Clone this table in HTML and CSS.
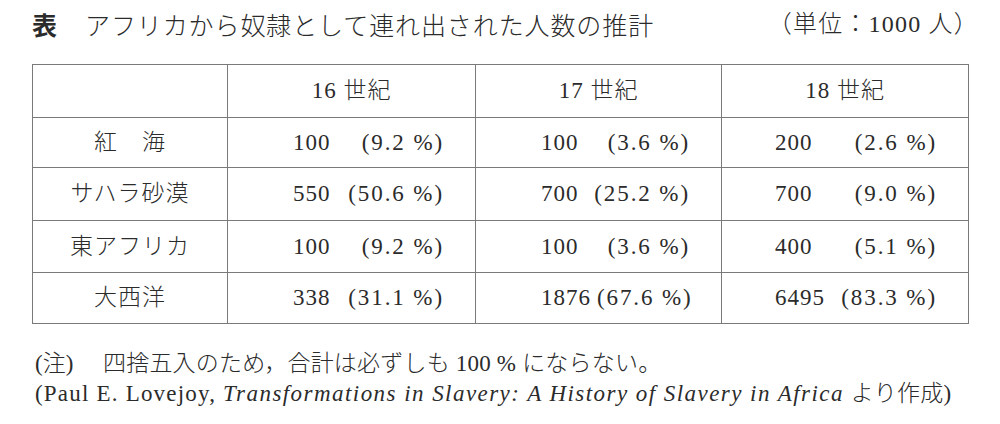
FILE: index.html
```html
<!DOCTYPE html>
<html lang="ja">
<head>
<meta charset="utf-8">
<link rel="stylesheet" href="styles.css">
</head>
<body>
<div class="page">
  <div class="title">
    <h1 class="heading"><span class="mark">表</span><span class="caption">アフリカから奴隷として連れ出された人数の推計</span></h1>
    <div class="unit">（単位：1000 人）</div>
  </div>
  <table class="data">
    <colgroup>
      <col class="c-label"><col class="c-16"><col class="c-17"><col class="c-18">
    </colgroup>
    <thead>
      <tr class="r-head"><th></th><th>16 世紀</th><th>17 世紀</th><th>18 世紀</th></tr>
    </thead>
    <tbody>
      <tr class="r1">
        <th class="label">紅　海</th>
        <td class="v"><div class="pair"><span class="n">100</span><span class="p">(9.2 %)</span></div></td>
        <td class="v"><div class="pair"><span class="n">100</span><span class="p">(3.6 %)</span></div></td>
        <td class="v v3"><div class="pair"><span class="n">200</span><span class="p">(2.6 %)</span></div></td>
      </tr>
      <tr class="r2">
        <th class="label">サハラ砂漠</th>
        <td class="v"><div class="pair"><span class="n">550</span><span class="p">(50.6 %)</span></div></td>
        <td class="v"><div class="pair"><span class="n">700</span><span class="p">(25.2 %)</span></div></td>
        <td class="v v3"><div class="pair"><span class="n">700</span><span class="p">(9.0 %)</span></div></td>
      </tr>
      <tr class="r3">
        <th class="label">東アフリカ</th>
        <td class="v"><div class="pair"><span class="n">100</span><span class="p">(9.2 %)</span></div></td>
        <td class="v"><div class="pair"><span class="n">100</span><span class="p">(3.6 %)</span></div></td>
        <td class="v v3"><div class="pair"><span class="n">400</span><span class="p">(5.1 %)</span></div></td>
      </tr>
      <tr class="r4">
        <th class="label">大西洋</th>
        <td class="v"><div class="pair"><span class="n">338</span><span class="p">(31.1 %)</span></div></td>
        <td class="v"><div class="pair"><span class="n">1876</span><span class="p">(67.6 %)</span></div></td>
        <td class="v v3"><div class="pair"><span class="n">6495</span><span class="p">(83.3 %)</span></div></td>
      </tr>
    </tbody>
  </table>
  <div class="notes">
    <p class="note"><span class="tag">(注)</span><span class="note-text">四捨五入のため，合計は必ずしも 100 % にならない。</span></p>
    <p class="source">(Paul E. Lovejoy, <i class="book">Transformations in Slavery: A History of Slavery in Africa</i> <span class="ja">より作成</span>)</p>
  </div>
</div>
</body>
</html>
```
FILE: styles.css
```css
html, body {
  margin: 0;
  padding: 0;
  background: #ffffff;
}
body {
  font-family: "Liberation Serif", "Noto Sans CJK JP", serif;
  color: #2b2b2b;
  width: 1000px;
  height: 424px;
  overflow: hidden;
}
.page {
  padding: 9px 0 0 32px;
}
.title {
  display: flex;
  justify-content: space-between;
  align-items: center;
  height: 30px;
  padding-right: 21px;
}
.heading {
  margin: 0;
  font-size: 25px;
  font-weight: normal;
  line-height: 30px;
  display: flex;
}
.mark {
  font-family: "Noto Sans CJK JP", sans-serif;
  font-weight: bold;
  width: 53px;
}
.caption {
  font-family: "Noto Sans CJK JP", sans-serif;
  letter-spacing: 0.9px;
  font-weight: 300;
}
.unit {
  font-size: 24px;
  line-height: 30px;
  letter-spacing: 1.2px;
  font-weight: 300;
}
.data {
  margin-top: 25px;
  border-collapse: collapse;
  table-layout: fixed;
  width: 936px;
  border: 1px solid #7a7a7a;
}
.data th, .data td {
  border: 1px solid #7a7a7a;
  padding: 0;
  font-weight: 300;
  font-size: 23px;
  line-height: 28px;
  text-align: center;
  vertical-align: middle;
  white-space: nowrap;
}
.c-label { width: 195px; }
.c-16 { width: 248px; }
.c-17 { width: 246px; }
.c-18 { width: 247px; }
.r-head { height: 53px; }
.r1 { height: 50px; }
.r2 { height: 53px; }
.r3 { height: 52px; }
.r4 { height: 51px; }
.data th {
  letter-spacing: 1px;
}
.label {
  letter-spacing: 2px;
}
.data td.v {
  padding: 0 31px 0 65px;
}
.data td.v3 {
  padding-left: 53px;
}
.pair {
  display: flex;
  justify-content: space-between;
  gap: 6px;
  letter-spacing: 1px;
}
.p {
  letter-spacing: 1.9px;
}
.notes {
  margin-top: 25px;
  padding-left: 3px;
  font-size: 23px;
  line-height: 30px;
  font-weight: 300;
}
.notes p {
  margin: 0;
  white-space: nowrap;
}
.tag {
  display: inline-block;
  width: 68px;
}
.note-text {
  letter-spacing: 0.2px;
}
.source {
  font-size: 23px;
  line-height: 30px;
  letter-spacing: 1.2px;
}
.source .ja {
  letter-spacing: 0.3px;
}
.book {
  letter-spacing: 1.45px;
}
```
